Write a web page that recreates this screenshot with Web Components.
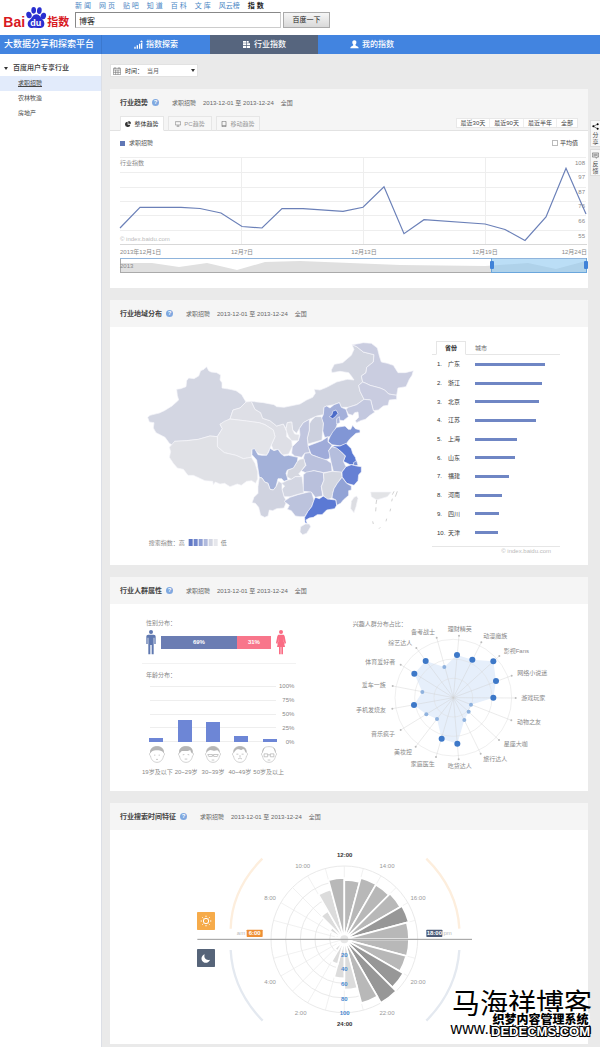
<!DOCTYPE html>
<html lang="zh-CN">
<head>
<meta charset="utf-8">
<meta name="viewport" content="width=device-width, initial-scale=1">
<title>百度指数 - 行业指数</title>
<style>
html, body { margin: 0; }
body { font: 6px/10px "Liberation Sans", "Noto Sans CJK SC", sans-serif; color: #555; background: #fff; position: relative; min-height: 100vh; display: flex; flex-direction: column; }
.columns { display: grid; grid-template-columns: 17% 1fr; flex: 1; }
main { background: #eaeaea; padding: 10px 12px 3px 8px; display: flex; flex-direction: column; gap: 12px; min-width: 0; }
.two { display: grid; grid-template-columns: 320px 1fr; }
.people { display: grid; grid-template-columns: 230px 1fr; }
</style>
</head>
<body>
<idx-header></idx-header>
<idx-nav></idx-nav>
<div class="columns">
  <idx-sidebar></idx-sidebar>
  <main>
    <idx-period></idx-period>
    <idx-card heading="行业趋势">
      <trend-tabs slot="tabs"></trend-tabs>
      <trend-chart></trend-chart>
    </idx-card>
    <idx-card heading="行业地域分布">
      <div class="two"><china-map></china-map><region-rank></region-rank></div>
    </idx-card>
    <idx-card heading="行业人群属性">
      <div class="people"><people-stats></people-stats><interest-radar></interest-radar></div>
    </idx-card>
    <idx-card heading="行业搜索时间特征">
      <hour-rose></hour-rose>
    </idx-card>
  </main>
</div>
<side-tools></side-tools>
<site-mark></site-mark>
<script>
const define = (name, html, setup) => customElements.define(name, class extends HTMLElement {
  connectedCallback() {
    if (this.shadowRoot) return;
    const t = document.createElement('template');
    t.innerHTML = html;
    const root = this.attachShadow({ mode: 'open' });
    root.append(t.content.cloneNode(true));
    if (setup) setup(root, this);
  }
});

define('idx-header', `
<style>
:host { display: flex; height: 35px; gap: 3px; }
.logo { width: 72px; height: 35px; flex: none; }
.logo svg { display: block; }
.right { display: flex; flex-direction: column; gap: 1px; }
nav { display: flex; gap: 8px; height: 11px; font-size: 7px; line-height: 11px; white-space: nowrap; }
nav a { color: #4a86c4; text-decoration: none; }
nav b { color: #222; }
form { display: flex; gap: 2px; margin: 0; }
input { box-sizing: border-box; width: 206px; height: 16px; border: 1px solid #ccc; border-top-color: #888; border-left-color: #888; padding: 0 3px; font: 8px/14px "Liberation Sans", "Noto Sans CJK SC", sans-serif; color: #222; outline: 0; }
button { width: 47px; height: 16px; padding: 0; border: 1px solid #aaa; background: linear-gradient(#f6f6f6, #d9d9d9); font: 7px/12px "Liberation Sans", "Noto Sans CJK SC", sans-serif; color: #222; }
</style>
<a class="logo" href="#" aria-label="百度指数">
<svg width="72" height="35" viewBox="0 0 216 105">
<text x="10" y="82" font-family="Liberation Sans" font-weight="bold" font-size="42" fill="#d8191f">Bai</text>
<g fill="#2a2fd0"><ellipse cx="87" cy="45" rx="8" ry="10" transform="rotate(-15 87 45)"/><ellipse cx="101" cy="31" rx="7" ry="10"/><ellipse cx="118" cy="32" rx="7" ry="10" transform="rotate(8 118 32)"/><ellipse cx="130" cy="48" rx="8" ry="10" transform="rotate(15 130 48)"/><path d="M109 43c10 0 13 10 19 16 8 7 7 24-6 25-8 0-18-2-26 0-13 1-17-15-8-23 8-6 10-18 21-18z"/></g>
<text x="91" y="78" font-family="Liberation Sans" font-weight="bold" font-size="27" fill="#fff">du</text>
<text x="142" y="79" font-family="Noto Sans CJK SC" font-weight="bold" font-size="33" fill="#d8191f">指数</text>
</svg></a>
<div class="right">
<nav><a href="#">新 闻</a><a href="#">网 页</a><a href="#">贴 吧</a><a href="#">知 道</a><a href="#">百 科</a><a href="#">文 库</a><a href="#">风云榜</a><b>指 数</b></nav>
<form><input type="text" value="博客" aria-label="搜索"><button type="button">百度一下</button></form>
</div>`);

define('idx-nav', `
<style>
:host { display: grid; grid-template-columns: 17% 18% 18% 18% 1fr; height: 19px; background: #4284e0; color: #fff; font-size: 8px; line-height: 19px; }
strong { font-size: 9px; font-weight: 500; padding-left: 4px; white-space: nowrap; border-right: 1px solid #3b78ce; }
a { display: flex; align-items: center; justify-content: center; gap: 3px; color: #fff; text-decoration: none; font-weight: 500; }
a.on { background: #56657e; }
svg { width: 9px; height: 9px; fill: #fff; }
</style>
<strong>大数据分享和探索平台</strong>
<a href="#"><svg viewBox="0 0 27 27"><path d="M1 20h4v6H1zM8 16h4v10H8zM15 11h4v15h-4zM21 8h4v18h-4zM18 6l5-5 4 6z"/></svg>指数探索</a>
<a href="#" class="on"><svg viewBox="0 0 27 27"><path d="M3 3h9v5H3zM3 10h9v6H3zM3 18h9v6H3zM14 3h6v5h-6zM14 10h10v6H14zM14 18h10v6H14z"/></svg>行业指数</a>
<a href="#"><svg viewBox="0 0 27 27"><path d="M13 1c5 0 7 3 6 8-1 3-2 4-3 6 0 3 10 3 10 10H1c0-7 9-7 9-10-1-2-2-3-3-6-1-5 2-8 6-8z"/></svg>我的指数</a>`);

define('idx-sidebar', `
<style>
:host { display: block; background: #fff; border-right: 1px solid #dcdfe6; padding-top: 6px; }
h2 { display: flex; align-items: center; gap: 5px; margin: 0; padding-left: 4px; height: 16px; font-size: 7px; font-weight: 500; color: #333; white-space: nowrap; }
svg { width: 4px; height: 3px; }
ul { list-style: none; margin: 0; padding: 0; }
li { line-height: 15px; padding-left: 18px; }
li.on { background: #e2ebfb; }
a { color: #444; text-decoration: none; }
.on a { text-decoration: underline; }
</style>
<h2><svg viewBox="0 0 4 3"><path d="M0 0h4L2 3z" fill="#333"/></svg>百度用户专享行业</h2>
<ul><li class="on"><a href="#">求职招聘</a></li><li><a href="#">农林牧渔</a></li><li><a href="#">房地产</a></li></ul>`);

define('idx-period', `
<style>
:host { display: flex; }
label { display: flex; align-items: center; box-sizing: border-box; width: 88px; height: 13px; background: #fff; border: 1px solid #e2e2e2; padding: 0 2px; gap: 4px; color: #333; white-space: nowrap; }
svg { flex: none; }
.cal { width: 8px; height: 8px; }
.arrow { width: 4px; height: 3px; }
select { appearance: none; flex: 1; min-width: 0; border: 0; padding: 0; background: none; font: 6px/10px "Liberation Sans", "Noto Sans CJK SC", sans-serif; color: #666; }
</style>
<label><svg class="cal" viewBox="0 0 24 24" fill="none" stroke="#777" stroke-width="2"><path d="M1 4h22v19H1zM6 0v6M18 0v6M1 9h22M8 9v14M15 9v14M1 16h22"/></svg>时间：
<select><option>当月</option></select><svg class="arrow" viewBox="0 0 4 3"><path d="M0 0h4L2 3z" fill="#333"/></svg></label>`);

define('idx-card', `
<style>
:host { display: block; background: #fff; }
header { background: #f5f5f5; }
.row { display: flex; align-items: center; height: 27px; padding-left: 10px; white-space: nowrap; color: #666; }
h3 { margin: 0; font-size: 7px; font-weight: 700; color: #444; }
button { width: 7px; height: 7px; border: 0; border-radius: 50%; background: #7fa8e0; color: #fff; padding: 0; font: bold 6px/7px "Liberation Sans", sans-serif; margin: 0 13px 0 4px; }
.row span { margin-right: 7px; }
</style>
<header><div class="row"><h3></h3><button type="button" aria-label="帮助">?</button><span>求职招聘</span><span>2013-12-01 至 2013-12-24</span><span>全国</span></div><slot name="tabs"></slot></header>
<slot></slot>`, (root, host) => { root.querySelector('h3').textContent = host.getAttribute('heading'); });

define('trend-tabs', `
<style>
:host { display: flex; box-sizing: border-box; justify-content: space-between; height: 15px; padding: 0 10px; border-bottom: 1px solid #e2e2e2; }
div { display: flex; gap: 4px; }
button { font: 6px/8px "Liberation Sans", "Noto Sans CJK SC", sans-serif; white-space: nowrap; }
.tabs button { box-sizing: border-box; width: 44px; height: 15px; display: flex; align-items: center; justify-content: center; gap: 3px; padding: 0; color: #999; background: #f7f7f7; border: 1px solid #e6e6e6; border-bottom-color: #e2e2e2; }
.tabs button.on { background: #fff; color: #333; border-bottom-color: #fff; }
svg { width: 6px; height: 6px; }
.ranges { gap: 0; align-self: start; margin: 2px 0 0; background: #fff; border: 1px solid #e8e8e8; }
.ranges button { border: 0; border-right: 1px solid #eee; background: none; color: #444; padding: 0 4px; height: 8px; }
.ranges button:last-child { border: 0; }
</style>
<div class="tabs">
<button type="button" class="on"><svg viewBox="0 0 18 18" fill="#333"><path d="M8 2a8 8 0 1 0 8 9H8z"/><path d="M10 0a8 8 0 0 1 8 8h-8z"/></svg>整体趋势</button>
<button type="button"><svg viewBox="0 0 18 18" fill="none" stroke="#888" stroke-width="2"><path d="M1 2h16v10H1zM9 12v4M5 16h8"/></svg>PC趋势</button>
<button type="button"><svg viewBox="0 0 18 18" fill="none" stroke="#777" stroke-width="2"><path d="M3 1h12v16H3zM3 14h12"/></svg>移动趋势</button></div>
<div class="ranges"><button type="button">最近30天</button><button type="button">最近90天</button><button type="button">最近半年</button><button type="button">全部</button></div>`);

define('trend-chart', `
<style>
:host { display: block; }
.legend { display: flex; justify-content: space-between; align-items: center; height: 24px; padding: 0 10px; color: #555; }
.key { display: flex; align-items: center; gap: 4px; }
i { width: 5px; height: 5px; background: #6077b5; }
label { display: flex; align-items: center; gap: 2px; color: #333; }
input { appearance: none; margin: 0; width: 6px; height: 6px; border: 1px solid #bbb; background: #fff; }
svg { display: block; width: 100%; height: auto; }
.grid { stroke: #eee; shape-rendering: crispEdges; }
text { font-size: 6px; fill: #888; dominant-baseline: central; }
.src { font-size: 6px; fill: #bbb; }
</style>
<div class="legend"><span class="key"><i></i>求职招聘</span><label><input type="checkbox">平均值</label></div>
<svg viewBox="110 155 478 133">
<path class="grid" d="M120 157.5H586M120 172.5H586M120 187.5H586M120 201.5H586M120 215.5H586M120 230.5H586M241.500 157V244M363.500 157V244M485.500 157V244"/>
<path d="M120 244.500H587" stroke="#d8d8d8"/>
<text x="120" y="163">行业指数</text>
<text class="src" x="120" y="239">© index.baidu.com</text>
<g text-anchor="end"><text x="585" y="163">108</text><text x="585" y="177">97</text><text x="585" y="192">87</text><text x="585" y="206">76</text><text x="585" y="221">66</text><text x="585" y="236">55</text><text x="587" y="252">12月24日</text></g>
<text x="120" y="252">2013年12月1日</text>
<g text-anchor="middle"><text x="242" y="252">12月7日</text><text x="364" y="252">12月13日</text><text x="485" y="252">12月19日</text></g>
<path d="M120 228L140 207.300L181 207.300L200 208.500L221 213L242 226.500L262 228L282 208.500L303 208.700L343 211.300L363 207.300L384 186.700L404 233.700L424 219.700L485 224L505 229.500L525 240.500L546 217L566 168.300L586 214" fill="none" stroke="#6b80b8" stroke-width="1.200"/>
<path d="M120 263L152 263L179 267L207 263L237 270L265 262L300 261L400 265L485 266L528 263L556 269L586 261V272.500H120z" fill="#e0e0e0"/>
<path d="M120.500 272.500V258.500" stroke="#aaa" fill="none"/><path d="M120 258.500H586" stroke="#8fb4dc"/><path d="M120 272.500H586" stroke="#aaa"/>
<rect x="492" y="259" width="94" height="14" fill="#8ec8f0" fill-opacity=".6"/>
<path d="M491.500 258V273M586.500 258V273M492 272.500H586" stroke="#6aa6dc"/>
<rect x="490" y="261" width="4" height="8" rx="1" fill="#3f82d8"/><rect x="584" y="261" width="4" height="8" rx="1" fill="#3f82d8"/>
<text x="120" y="266">2013</text>
</svg>`);

const provinces = [
['#d3d6e2','53,292 60,286 72,283 88,279 103,272 126,258 146,240 142,226 140,208 152,206 168,200 170,182 176,174 192,176 206,168 212,152 222,148 230,140 236,152 243,156 260,158 272,165 270,180 276,188 276,204 300,208 318,212 335,224 342,236 348,246 342,252 330,264 309,270 300,297 270,313 277,326 262,350 240,348 205,358 170,362 134,364 128,376 118,370 105,352 78,338 70,324 72,308 58,306'],
['#dedfe6','348,246 364,244 375,268 392,278 398,295 420,302 440,318 460,312 470,335 470,350 485,362 487,380 476,402 458,405 445,388 430,390 424,375 435,350 430,330 405,314 388,308 370,306 350,303 300,297 309,270 330,264'],
['#e3e4e9','270,313 283,304 300,297 350,303 388,308 405,314 430,330 435,350 424,375 420,385 410,406 388,402 366,388 364,412 340,416 318,406 283,398 262,380 262,350 277,326'],
['#e0e1e6','118,382 134,364 170,362 205,358 240,348 262,350 262,380 283,398 318,406 340,416 364,412 375,430 383,455 383,476 377,490 365,482 350,484 334,496 322,492 300,500 284,490 270,492 256,486 250,494 248,484 225,482 190,466 174,466 160,448 142,444 130,430 118,412 122,395'],
['#d2d5e0','364,244 400,248 432,254 440,260 462,262 510,252 530,240 548,232 556,220 553,208 570,210 590,202 620,186 652,178 672,180 664,168 656,158 630,154 606,158 604,150 613,133 638,128 664,106 672,88 666,74 680,80 700,96 732,104 730,126 710,142 708,158 694,168 698,186 686,196 690,214 702,238 680,254 655,262 634,262 628,248 612,254 590,258 582,262 580,284 560,288 538,298 520,308 508,326 500,340 488,330 485,306 472,308 468,326 460,312 440,318 420,302 398,295 392,278 375,268'],
['#cacde0','666,74 680,72 700,68 724,70 742,84 748,108 754,126 772,130 790,136 804,158 826,158 850,152 846,166 838,178 828,200 804,204 800,226 776,222 764,210 750,204 720,196 708,190 698,186 694,168 708,158 710,142 730,126 732,104 700,96 680,80'],
['#c9cce0','698,186 708,190 720,196 750,204 764,210 776,222 800,226 800,238 778,240 774,256 760,258 745,270 730,272 722,240 702,238 690,214 686,196'],
['#c3c8df','722,240 730,272 735,276 720,286 706,298 692,302 680,308 676,302 686,292 684,276 674,278 668,286 655,282 648,268 655,262 680,254 702,238'],
['#a4b0da','582,262 590,258 600,264 612,254 628,248 634,262 648,268 655,290 640,302 625,300 620,318 612,336 600,350 584,352 578,332 580,310 574,296 580,284'],
['#4c6bc8','598,290 606,284 608,274 618,270 624,280 616,290 608,296'],
['#aab5dc','620,296 628,290 630,308 620,312'],
['#ccd0de','545,300 556,290 574,290 580,310 578,332 576,360 534,372 532,354 538,330 538,312'],
['#c1c6df','508,326 520,308 538,298 538,312 538,330 532,354 534,376 540,398 524,400 515,412 494,408 485,400 487,380 505,362 510,345'],
['#e0e1e7','470,335 468,326 472,308 485,306 488,330 494,342 508,344 505,362 485,362 476,350'],
['#8196d5','600,350 608,336 620,322 645,318 655,328 662,328 668,316 676,326 690,330 690,338 678,340 660,356 648,372 630,378 606,374 594,364'],
['#9fabd9','534,378 576,362 594,350 594,366 606,376 596,392 602,402 598,416 582,420 560,410 544,404 540,394'],
['#5b79d2','606,378 630,378 648,370 664,386 668,400 676,412 682,434 660,434 640,424 646,408 632,394'],
['#b5bedd','596,392 606,380 620,384 632,394 646,408 640,424 648,440 634,458 610,454 604,430'],
['#7990d4','670,428 680,422 684,436 672,438'],
['#6680d4','648,440 664,434 680,438 694,440 694,456 686,464 684,482 672,496 650,490 636,470 636,456'],
['#bac1dd','520,416 524,400 540,398 544,404 560,410 590,420 604,430 606,454 580,458 550,452 530,460 514,452 528,436'],
['#d5d7e0','502,424 510,418 522,416 526,436 514,452 506,462 515,470 496,470 484,478 470,470 474,450 490,444'],
['#a3b1d9','366,388 374,386 384,404 396,406 410,406 416,396 420,385 432,392 444,388 452,400 462,408 476,406 504,412 502,424 490,444 472,450 468,460 474,480 462,484 455,476 444,476 438,500 430,510 420,508 414,490 404,486 396,474 388,472 383,440 380,420 366,404'],
['#d3d6e2','474,480 484,478 496,470 516,470 520,500 522,518 500,524 480,530 462,530 456,508 464,498 454,490'],
['#d0d3e0','388,472 396,474 404,486 414,490 420,508 430,510 438,500 446,484 456,490 456,508 462,530 470,544 462,564 440,566 428,572 418,570 414,588 404,592 392,586 386,562 376,550 366,548 372,532 384,520 384,500'],
['#bcc3dd','462,544 480,532 504,524 544,514 552,540 545,560 534,574 524,590 510,590 496,588 484,572 472,568 478,556'],
['#5b79d4','552,540 556,532 568,536 580,528 600,538 618,540 620,556 614,566 590,570 576,584 562,584 550,592 538,594 528,600 532,612 525,608 524,592 534,574 545,560'],
['#b9c0dc','520,464 530,456 552,452 580,458 582,480 574,500 578,528 556,532 544,516 520,514'],
['#d3d6e0','580,460 606,454 634,456 636,470 622,490 612,506 608,520 606,534 594,538 580,528 574,500 582,480'],
['#92a3d6','636,472 650,490 664,498 664,510 656,512 656,526 640,540 632,550 620,556 618,540 606,534 608,520 612,506 622,490'],
['#dcdde2','680,528 684,535 678,560 672,578 662,566 664,544 672,532'],
['#d3d6e2','512,620 526,612 538,612 542,620 530,640 518,644 510,636'],
['#e2e3e6','722,516 784,516 772,530 740,540 724,530']];
define('china-map', `
<style>
:host { display: block; }
svg { display: block; width: 100%; height: auto; }
polygon { stroke: #f6f6fa; stroke-width: 2; stroke-linejoin: round; }
text { font-size: 18px; fill: #888; dominant-baseline: central; }
</style>
<svg viewBox="-60 21 960 714"><g id="p"></g>
<path d="M740 540l-2 12m0 10l-1 12m-9 30l2 8m17 14l4-4m17-18l2-8m10-22l2-8m3-22l2-8m0-12l5-10m4 16l6-16" stroke="#bbb" stroke-width="2" fill="none"/>
<text x="56" y="668">搜索指数：高</text><text x="272" y="668">低</text>
<g><rect x="176" y="657" width="12" height="21" fill="#5f77c4"/><rect x="191" y="657" width="12" height="21" fill="#7086cc"/><rect x="206" y="657" width="12" height="21" fill="#8f9fd4"/><rect x="221" y="657" width="12" height="21" fill="#b0badd"/><rect x="236" y="657" width="12" height="21" fill="#d3d6e2"/><rect x="251" y="657" width="12" height="21" fill="#e6e7ec"/></g>
</svg>`, root => {
  root.getElementById('p').innerHTML = provinces.map(([f, p]) => `<polygon fill="${f}" points="${p}"/>`).join('');
});

define('region-rank', `
<style>
:host { display: block; padding: 14px 28px 0 2px; }
.tabs { display: flex; box-sizing: border-box; height: 14px; padding-left: 4px; border-bottom: 1px solid #e6e6e6; }
button { box-sizing: border-box; width: 30px; height: 14px; padding: 0; border: 1px solid transparent; background: none; font: 6px/10px "Liberation Sans", "Noto Sans CJK SC", sans-serif; color: #666; }
.tabs .on { border-color: #e6e6e6; border-bottom-color: #fff; color: #222; background: #fff; font-weight: 700; }
table { border-collapse: collapse; width: 100%; height: 187px; color: #333; }
td { padding: 0; } td:first-child { width: 16px; padding-left: 5px; box-sizing: border-box; } td:nth-child(2) { width: 27px; }
i { display: block; height: 3px; background: #6f86c4; }
p { margin: 0; margin-top: 4px; border-top: 1px solid #e6e6e6; text-align: right; padding-right: 9px; line-height: 8px; color: #bbb; }
</style>
<div class="tabs"><button type="button" class="on">省份</button><button type="button">城市</button></div>
<table aria-label="省份排名"><tbody></tbody></table><p>© index.baidu.com</p>`, root => {
  const data = [['广东',82],['浙江',79],['北京',75],['江苏',72],['上海',49],['山东',47],['福建',40],['河南',32],['四川',28],['天津',27]];
  root.querySelector('tbody').innerHTML = data.map(([n, w], i) => `<tr><td>${i + 1}.</td><td>${n}</td><td><i style="width:${w}%"></i></td></tr>`).join('');
});

const hair = ['M3 22C2 8 12 1 24 1s22 7 21 21C40 14 32 12 24 13 14 12 8 15 3 22z','M4 24C0 8 12 0 26 1c16 0 20 12 18 23-4-4-6-8-7-12-8 5-20 3-26 3-3 2-5 5-7 9z','M4 20C4 8 14 1 24 1s20 7 20 19l-5-6c-5-3-9 3-15 0-8-4-14-2-20 6z','M5 22C2 8 14 1 24 1s22 6 19 21c-3-4-5-7-6-11-6-4-8 4-14 0-6-2-9 0-12 2-3 3-4 5-6 9z','M4 22C3 12 7 6 12 4 8 10 6 16 4 22zM44 22C45 12 41 6 36 4c4 6 6 12 8 18z'];
const features = ['M15 28h4M29 28h4M21 41h6','M14 27l5-1M29 26l5 1M20 40h8','M8 26h14v6H11zM26 26h14l-3 6H26zM22 28h4M20 43h8','M13 25h6M29 25h6M18 40c4-4 8-4 12 0M24 28v6','M9 24h11v9H9zM28 24h11v9H28zM20 27h8M20 43h8'];
define('people-stats', `
<style>
:host { display: block; padding: 14px 44px 0 32px; color: #888; }
h4 { margin: 0; padding-left: 4px; font-size: 6px; line-height: 10px; font-weight: 400; }
.gender { display: flex; align-items: center; gap: 5px; height: 27px; margin: 1px 0 7px; padding: 0 10px 0 4px; }
.gender svg { width: 10px; height: 25px; flex: none; }
.bar { display: flex; flex: 1; height: 13px; font-size: 6px; line-height: 13px; font-weight: 700; color: #fff; text-align: center; }
.m { flex: 69; background: #6b7db3; } .f { flex: 31; background: #f8768b; }
.age { border-top: 1px solid #f2f2f2; padding-top: 6px; }
.plot { display: grid; grid-template-columns: 134px 1fr; height: 56px; margin-top: 6px; }
.lines, .bars { grid-area: 1 / 1; }
.lines { display: flex; flex-direction: column; justify-content: space-between; padding-left: 8px; }
.lines i { height: 1px; background: #eee; }
.bars { display: grid; grid-template-columns: repeat(5, 1fr); margin-right: -8px; align-items: end; justify-items: center; }
.bars i { width: 14px; background: #6d86d6; }
.axis { display: flex; flex-direction: column; justify-content: space-between; text-align: right; margin: -4px 3px; }
.axis span { line-height: 8px; }
ul { list-style: none; display: grid; grid-template-columns: repeat(5, 1fr); width: 142px; margin: 4px 0 0; padding: 0; }
li { display: flex; flex-direction: column; align-items: center; gap: 4px; white-space: nowrap; }
li svg { width: 16px; height: 17px; }
</style>
<h4>性别分布：</h4>
<div class="gender"><svg viewBox="0 0 30 75" fill="#5f78b0"><circle cx="15" cy="6" r="6"/><path d="M7 14h16c4 0 6 2 6 6v22h-4V23h-2v50h-6V45h-4v28H7V23H5v19H1V20c0-4 2-6 6-6z"/></svg>
<div class="bar"><span class="m">69%</span><span class="f">31%</span></div>
<svg viewBox="0 0 30 75" fill="#fa6c84"><circle cx="15" cy="6" r="6"/><path d="M9 14h12c3 0 4 2 5 5l4 20-4 3-5-18 6 27h-6v22h-5V51h-2v22H9V51H3l6-27-5 18-4-3 4-20c1-3 2-5 5-5z"/></svg></div>
<div class="age"><h4>年龄分布：</h4>
<div class="plot"><div class="lines"><i></i><i></i><i></i><i></i><i></i></div>
<div class="bars"><i style="height:4px"></i><i style="height:22px"></i><i style="height:20px"></i><i style="height:6px"></i><i style="height:3px"></i></div>
<div class="axis"><span>100%</span><span>75%</span><span>50%</span><span>25%</span><span>0%</span></div></div>
<ul></ul></div>`, root => {
  root.querySelector('ul').innerHTML = ['19岁及以下','20~29岁','30~39岁','40~49岁','50岁及以上'].map((t, i) =>
    `<li><svg viewBox="0 0 48 52"><path d="M4 20C5 6 12 2 24 2s19 4 20 18c4 2 4 9 0 10-2 13-10 20-20 20S6 43 4 30c-4-1-4-8 0-10z" fill="#fff" stroke="#bbb" stroke-width="2"/><path d="${hair[i]}" fill="#b5b5b5"/><path d="${features[i]}" fill="none" stroke="#aaa" stroke-width="2"/></svg>${t}</li>`).join('');
});

define('interest-radar', `
<style>
:host { display: block; }
svg { display: block; width: 100%; height: auto; }
text { font-size: 18px; fill: #888; dominant-baseline: central; }
</style>
<svg viewBox="0 12 744 561"><text x="38" y="73">兴趣人群分布占比：</text><g id="g"></g></svg>`, root => {
  const d = [
    [460,293,527,294,580,294,'游戏玩家'],[468,243,515,227,577,219,'网络小说迷'],[460,184,478,168,529,154,'影视Fans'],
    [397,179,424,127,466,108,'动漫魔族'],[351,165,357,107,359,87,'理财精英'],[313,201,290,113,249,95,'备考战士'],
    [257,183,229,144,181,129,'综艺达人'],[223,221,182,194,121,185,'体育爱好者'],[247,276,158,258,101,256,'爱车一族'],
    [222,315,157,326,93,331,'手机发烧友'],[259,343,182,390,129,401,'音乐疯子'],[291,357,227,440,189,457,'美妆控'],
    [305,416,288,471,248,491,'家庭医生'],[352,431,356,478,359,498,'吃货达人'],[373,360,422,461,466,478,'旅行达人'],
    [386,335,477,420,527,432,'星座大咖'],[393,314,514,361,567,367,'动物之友']];
  let s = `<polygon points="${d.map(p => p[0] + ',' + p[1]).join(' ')}" fill="#e6effb"/>`;
  for (const r of [58, 116, 175]) s += `<circle cx="340" cy="293" r="${r}" fill="none" stroke="#ddd" stroke-width="2" stroke-opacity=".7"/>`;
  for (const p of d) {
    const big = Math.hypot(p[0] - 340, p[1] - 293) > 110;
    s += `<path d="M340 293L${p[2]} ${p[3]}" stroke="#ccc" stroke-opacity=".6" stroke-width="2"/><circle cx="${p[2]}" cy="${p[3]}" r="3" fill="#bbb"/>`
      + `<circle cx="${p[0]}" cy="${p[1]}" r="${big ? 9 : 6}" fill="${big ? '#3d78c8' : '#8fb2de'}"/>`
      + `<text x="${p[4]}" y="${p[5]}" text-anchor="middle">${p[6]}</text>`;
  }
  root.getElementById('g').innerHTML = s;
});

define('hour-rose', `
<style>
:host { display: block; }
svg { display: block; width: 100%; height: auto; }
text { font-size: 18px; fill: #999; dominant-baseline: central; text-anchor: middle; }
.b { font-weight: 700; fill: #333; } .n { font-weight: 700; fill: #4a8ad0; } .w { font-weight: 700; fill: #fff; } .h { fill: #bbb; }
</style>
<svg viewBox="-210 90 1434 642"><g id="g"></g>
<g fill="none" stroke-width="7"><path d="M247 176Q155 268 152 386M739 176Q832 268 838 386" stroke="#fdeedd"/><path d="M152 450Q158 570 248 662M838 450Q830 570 739 662" stroke="#e4e9f0"/></g>
<path d="M52 418H876" stroke="#999" stroke-width="3"/>
<rect x="51" y="336" width="54" height="54" rx="2" fill="#f6ab4a"/><circle cx="78" cy="363" r="8" fill="none" stroke="#fff" stroke-width="3"/><path d="M78 347v4M78 375v4M62 363h4M90 363h4M67 352l3 3M86 371l3 3M67 374l3-3M86 355l3-3" stroke="#fff" stroke-width="3"/>
<rect x="51" y="447" width="54" height="54" rx="2" fill="#566479"/><path d="M74 463a13 13 0 1 0 16 16c-10 4-20-4-16-16z" fill="#fff"/>
<rect x="200" y="389" width="48" height="22" rx="2" fill="#ee8f35"/><rect x="739" y="389" width="48" height="22" rx="2" fill="#4c5b78"/>
<text class="h" x="183" y="400">am</text><text class="h" x="803" y="400">pm</text><text class="w" x="224" y="400">6:00</text><text class="w" x="763" y="400">18:00</text>
<text class="b" x="494" y="166">12:00</text><text class="b" x="494" y="673">24:00</text>
<text x="368" y="199">10:00</text><text x="621" y="199">14:00</text><text x="270" y="293">8:00</text><text x="714" y="293">16:00</text><text x="270" y="546">4:00</text><text x="714" y="546">20:00</text><text x="362" y="639">2:00</text><text x="621" y="639">22:00</text>
<text class="n" x="493" y="464">20</text><text class="n" x="493" y="508">40</text><text class="n" x="493" y="552">60</text><text class="n" x="493" y="596">80</text><text class="n" x="494" y="640">100</text>
</svg>`, root => {
  const cx = 493, cy = 418, at = (a, r) => { const t = a * Math.PI / 180; return (cx + r * Math.sin(t)).toFixed(1) + ' ' + (cy - r * Math.cos(t)).toFixed(1); };
  let s = '';
  for (const r of [44, 88, 132, 176, 220]) s += `<circle cx="${cx}" cy="${cy}" r="${r}" fill="none" stroke="#eaeaea" stroke-width="3"/>`;
  for (let a = 0; a < 360; a += 15) s += `<path d="M${cx} ${cy}L${at(a, 220)}" stroke="#eaeaea" stroke-width="2"/>`;
  const L = '#dcdcdc', M = '#b8b8b8', D = '#979797';
  [[-75,27,L],[-60,50,L],[-45,98,L],[-30,155,L],[-15,184,M],[0,178,M],[15,191,M],[30,189,M],[45,194,M],[60,200,D],[75,194,M],[90,194,M],[105,192,M],[120,204,D],[135,220,D],[150,198,M],[165,151,L],[180,117,L],[195,77,L],[210,40,L],[225,24,L]]
    .forEach(([a, r, c]) => { s += `<path d="M${cx} ${cy}L${at(a, r)}A${r} ${r} 0 0 1 ${at(a + 15, r)}Z" fill="${c}" stroke="#fff" stroke-width="5"/>`; });
  s += `<circle cx="${cx}" cy="${cy}" r="12" fill="#e6e6e6"/>`;
  root.getElementById('g').innerHTML = s;
});

define('side-tools', `
<style>
:host { position: absolute; top: 120px; right: 0; display: flex; flex-direction: column; gap: 2px; }
button { box-sizing: border-box; width: 10px; height: 27px; padding: 2px 0; display: flex; flex-direction: column; align-items: center; gap: 2px; background: #f8f8f8; border: 1px solid #ddd; border-right: 0; font: 6px/7px "Liberation Sans", "Noto Sans CJK SC", sans-serif; color: #444; }
span { width: 6px; line-height: 7px; white-space: normal; }
svg { width: 7px; height: 7px; flex: none; }
</style>
<button type="button"><svg viewBox="0 0 21 21"><path d="M18 3L4 10l14 8" fill="none" stroke="#333" stroke-width="2"/><circle cx="17" cy="4" r="3"/><circle cx="4" cy="10" r="3"/><circle cx="17" cy="17" r="3"/></svg><span>分享</span></button>
<button type="button"><svg viewBox="0 0 21 21"><path d="M1 3h19v12h-5l-2 4-2-4H1zM4 7h13M4 11h13" fill="none" stroke="#666" stroke-width="2"/></svg><span>反馈</span></button>`);

define('site-mark', `
<style>
:host { position: absolute; right: 8px; bottom: 6px; display: grid; justify-items: end; color: #000; white-space: nowrap; }
.name { grid-area: 1 / 1; font: 28px/32px "Liberation Serif", "Noto Sans CJK SC", serif; padding-bottom: 20px; }
.url { grid-area: 1 / 1; align-self: end; font-size: 16px; line-height: 20px; padding-bottom: 2px; }
.cms { grid-area: 1 / 1; align-self: end; display: flex; flex-direction: column; align-items: center; font-weight: 700; margin-right: 2px; padding-bottom: 3px; }
.cms b { font-size: 12px; line-height: 12px; -webkit-text-stroke: 3px #fff; paint-order: stroke fill; }
.cms span { font-size: 13px; line-height: 12px; color: #fff; -webkit-text-stroke: 2px #000; paint-order: stroke fill; }
</style>
<span class="name">马海祥博客</span><span class="url">www.mahaixiang.cn</span>
<div class="cms"><b>织梦内容管理系统</b><span>DEDECMS.COM</span></div>`);
</script>
</body>
</html>
